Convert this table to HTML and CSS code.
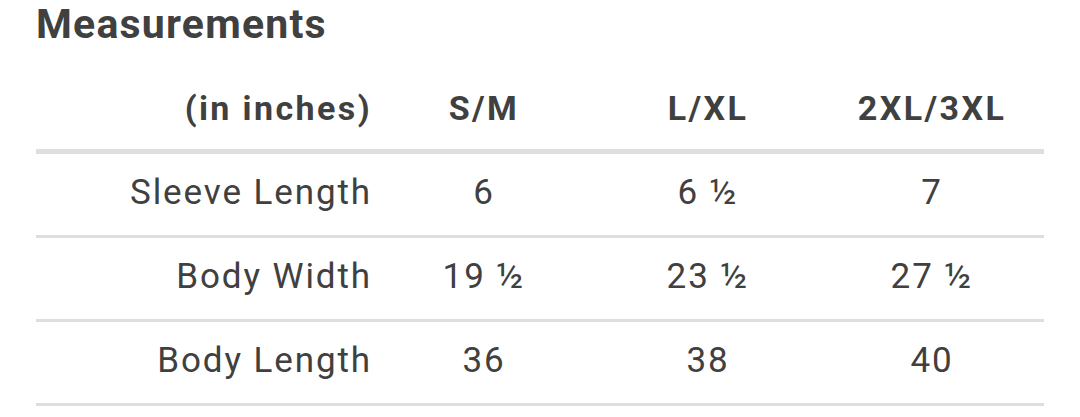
FILE: index.html
```html
<!DOCTYPE html>
<html>
<head>
<meta charset="utf-8">
<link rel="stylesheet" href="styles.css">
</head>
<body>
<section class="sheet">
  <h2 class="title">Measurements</h2>
  <div class="table">
    <div class="row head">
      <div class="cell label">(in inches)</div>
      <div class="cell">S/M</div>
      <div class="cell">L/XL</div>
      <div class="cell">2XL/3XL</div>
    </div>
    <div class="row">
      <div class="cell label">Sleeve Length</div>
      <div class="cell">6</div>
      <div class="cell">6 ½</div>
      <div class="cell">7</div>
    </div>
    <div class="row">
      <div class="cell label">Body Width</div>
      <div class="cell">19 ½</div>
      <div class="cell">23 ½</div>
      <div class="cell">27 ½</div>
    </div>
    <div class="row">
      <div class="cell label">Body Length</div>
      <div class="cell">36</div>
      <div class="cell">38</div>
      <div class="cell">40</div>
    </div>
  </div>
</section>
</body>
</html>
```
FILE: styles.css
```css
html, body {
  margin: 0;
  padding: 0;
  background: #ffffff;
}
.sheet {
  padding-left: 36px;
  width: 1008px;
  font-family: Roboto, "Liberation Sans", sans-serif;
  color: #404040;
}
.title {
  margin: 0;
  font-size: 41px;
  line-height: 48px;
  font-weight: 700;
  letter-spacing: 1.2px;
}
.table {
  display: flex;
  flex-direction: column;
}
.row {
  display: grid;
  grid-template-columns: 336px 224px 224px 224px;
  padding: 19px 0 22px;
  border-bottom: 3px solid #dedee0;
  font-size: 35px;
  line-height: 40px;
  letter-spacing: 1.9px;
}
.row.head {
  padding: 40px 0 21px;
  border-bottom-width: 5px;
  font-size: 34px;
  font-weight: 700;
  letter-spacing: 2.4px;
}
.cell {
  text-align: center;
  white-space: nowrap;
}
.cell.label {
  text-align: right;
  padding-right: 0;
}
```
